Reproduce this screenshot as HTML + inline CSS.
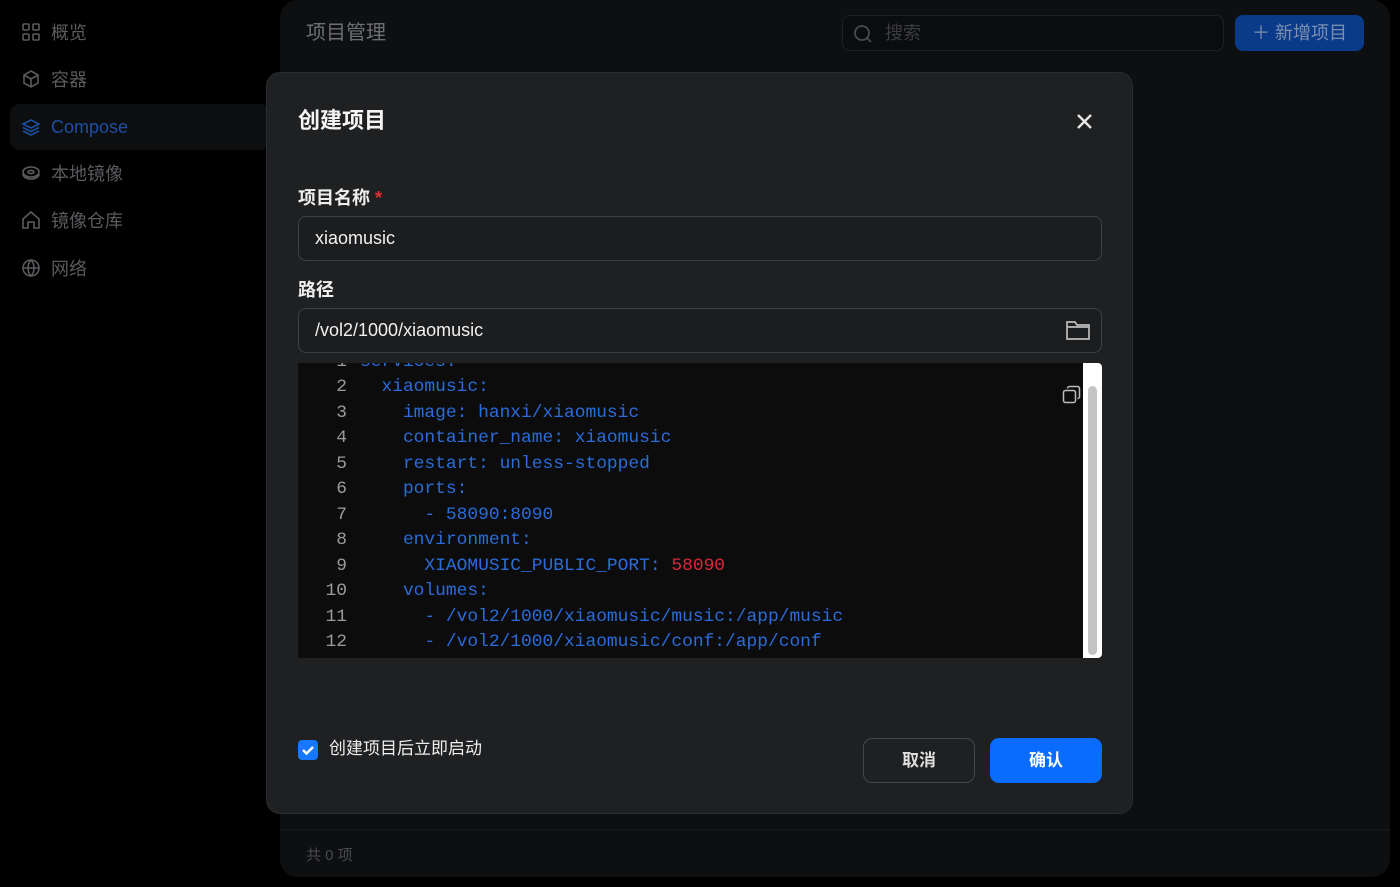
<!DOCTYPE html>
<html><head><meta charset="utf-8"><style>
*{margin:0;padding:0;box-sizing:border-box}
body{width:1400px;height:887px;background:#000;position:relative;overflow:hidden;font-family:"Liberation Sans","Noto Sans CJK SC",sans-serif;color:#e8e8e8}
.abs{position:absolute}
.nav{position:absolute;left:10px;width:260px;height:46px;display:flex;align-items:center;padding-left:11px;font-size:18px;color:#5a5b5e}
.nav svg{width:20px;height:20px;margin-right:10px;stroke:#5a5b5e;fill:none;stroke-width:1.6}
.main{left:280px;top:0;width:1110px;height:877px;background:#0e0f10;border-radius:18px}
.modal{left:266px;top:72px;width:867px;height:742px;background:#1f2022;border-radius:14px;border:1px solid #2a2b2e}
.inp{position:absolute;left:298px;width:804px;height:45px;border:1px solid #3f4044;border-radius:8px;background:#1c1d1f;font-size:18px;color:#f0f0f0;padding-left:16px;line-height:43px}
.code{left:298px;top:363px;width:804px;height:295px;background:#0c0c0d;overflow:hidden;font-family:"Liberation Mono",monospace;font-size:17.9px;line-height:25px}
.ln{position:absolute;left:0;width:49px;text-align:right;color:#9a9b9e}
.cd{position:absolute;left:62px;color:#2b6cd8;white-space:pre}
</style></head><body>
<div class="nav" style="top:9px"><svg viewBox="0 0 20 20"><rect x="2" y="2" width="6" height="6" rx="1"/><rect x="12" y="2" width="6" height="6" rx="1"/><rect x="2" y="12" width="6" height="6" rx="1"/><rect x="12" y="12" width="6" height="6" rx="1"/></svg>概览</div>
<div class="nav" style="top:56px"><svg viewBox="0 0 20 20"><path d="M10 2l7 4v8l-7 4-7-4V6z M3 6l7 4 7-4 M10 10v8"/></svg>容器</div>
<div class="nav" style="top:104px;background:#0d0e10;border-radius:10px;color:#1d4fa0"><svg viewBox="0 0 20 20" style="stroke:#1d4fa0"><path d="M10 3l8 4-8 4-8-4z M2 10.5l8 4 8-4 M2 14l8 4 8-4"/></svg>Compose</div>
<div class="nav" style="top:150px"><svg viewBox="0 0 20 20"><ellipse cx="10" cy="9" rx="8" ry="5"/><ellipse cx="10" cy="9" rx="3" ry="1.6"/><path d="M2 11c0 3 4 5 8 5s8-2 8-5"/></svg>本地镜像</div>
<div class="nav" style="top:197px"><svg viewBox="0 0 20 20"><path d="M2 9l8-7 8 7v9h-5v-6H7v6H2z"/></svg>镜像仓库</div>
<div class="nav" style="top:245px"><svg viewBox="0 0 20 20"><circle cx="10" cy="10" r="8"/><path d="M2 10h16 M10 2c-4 4-4 12 0 16 M10 2c4 4 4 12 0 16"/></svg>网络</div>

<div class="abs main"></div>
<div class="abs" style="left:306px;top:20px;font-size:20px;color:#6e6f72;line-height:26px">项目管理</div>
<div class="abs" style="left:842px;top:15px;width:382px;height:36px;border:1px solid #1f2023;border-radius:8px;background:#0b0c0d"></div>
<svg class="abs" style="left:852px;top:23px" width="22" height="22" viewBox="0 0 22 22" fill="none" stroke="#4a4b4e" stroke-width="1.8"><circle cx="10" cy="10" r="7"/><path d="M15 15l4 4"/></svg>
<div class="abs" style="left:885px;top:21px;font-size:18px;color:#3c3d40;line-height:24px">搜索</div>
<div class="abs" style="left:1235px;top:15px;width:129px;height:36px;background:#0a3a8a;border-radius:8px;color:#7d8fae;font-size:18px;line-height:36px;padding-left:17px">＋ 新增项目</div>
<div class="abs" style="left:280px;top:829px;width:1110px;height:1px;background:#18191b"></div>
<div class="abs" style="left:306px;top:844px;font-size:15px;color:#4a4b4e">共 0 项</div>

<div class="abs modal"></div>
<div class="abs" style="left:298px;top:107px;font-size:22px;font-weight:bold;color:#f4f4f4;line-height:28px">创建项目</div>
<svg class="abs" style="left:1075px;top:112px" width="19" height="19" viewBox="0 0 19 19" stroke="#e8e8e8" stroke-width="2.4"><path d="M3 3l13 13M16 3L3 16"/></svg>
<div class="abs" style="left:298px;top:186px;font-size:18px;font-weight:bold;color:#eee;line-height:24px">项目名称 <span style="color:#e0302f">*</span></div>
<div class="inp" style="top:216px">xiaomusic</div>
<div class="abs" style="left:298px;top:278px;font-size:18px;font-weight:bold;color:#eee;line-height:24px">路径</div>
<div class="inp" style="top:308px">/vol2/1000/xiaomusic</div>
<svg class="abs" style="left:1065px;top:318px" width="26" height="24" viewBox="0 0 26 24" fill="none" stroke="#bbb" stroke-width="1.7"><path d="M2 4h8l2 3h12v14H2z M2 9h22"/></svg>

<div class="abs code">
<div class="ln" style="top:-13px">1</div><div class="cd" style="top:-13px">services:</div>
<div class="ln" style="top:12px">2</div><div class="cd" style="top:12px">  xiaomusic:</div>
<div class="ln" style="top:37.5px">3</div><div class="cd" style="top:37.5px">    image: hanxi/xiaomusic</div>
<div class="ln" style="top:63px">4</div><div class="cd" style="top:63px">    container_name: xiaomusic</div>
<div class="ln" style="top:88.5px">5</div><div class="cd" style="top:88.5px">    restart: unless-stopped</div>
<div class="ln" style="top:114px">6</div><div class="cd" style="top:114px">    ports:</div>
<div class="ln" style="top:139.5px">7</div><div class="cd" style="top:139.5px">      - 58090:8090</div>
<div class="ln" style="top:165px">8</div><div class="cd" style="top:165px">    environment:</div>
<div class="ln" style="top:190.5px">9</div><div class="cd" style="top:190.5px">      XIAOMUSIC_PUBLIC_PORT: <span style="color:#d6283a">58090</span></div>
<div class="ln" style="top:216px">10</div><div class="cd" style="top:216px">    volumes:</div>
<div class="ln" style="top:241.5px">11</div><div class="cd" style="top:241.5px">      - /vol2/1000/xiaomusic/music:/app/music</div>
<div class="ln" style="top:267px">12</div><div class="cd" style="top:267px">      - /vol2/1000/xiaomusic/conf:/app/conf</div>
<div class="abs" style="left:785px;top:0;width:19px;height:295px;background:#fff;border-radius:0 4px 4px 0"></div>
<div class="abs" style="left:790px;top:23px;width:9px;height:269px;background:#c4c4c4;border-radius:5px"></div>
</div>
<svg class="abs" style="left:1062px;top:385px" width="20" height="20" viewBox="0 0 20 20" fill="none" stroke="#bbb" stroke-width="1.5"><rect x="1.5" y="5.5" width="12" height="12" rx="2"/><path d="M5.5 3.5a2 2 0 0 1 2-2h8a2 2 0 0 1 2 2v8a2 2 0 0 1-2 2"/></svg>

<div class="abs" style="left:298px;top:740px;width:20px;height:20px;background:#1677ff;border-radius:4px"></div>
<svg class="abs" style="left:298px;top:740px" width="20" height="20" viewBox="0 0 20 20" fill="none" stroke="#fff" stroke-width="2.4"><path d="M5 10l3.5 3.5L15 7"/></svg>
<div class="abs" style="left:329px;top:738px;font-size:17px;color:#eee;line-height:22px">创建项目后立即启动</div>
<div class="abs" style="left:863px;top:738px;width:112px;height:45px;border:1px solid #45464a;border-radius:9px;color:#ddd;font-size:17px;font-weight:bold;text-align:center;line-height:43px">取消</div>
<div class="abs" style="left:990px;top:738px;width:112px;height:45px;background:#0a6cff;border-radius:9px;color:#fff;font-size:17px;font-weight:bold;text-align:center;line-height:45px">确认</div>
</body></html>
